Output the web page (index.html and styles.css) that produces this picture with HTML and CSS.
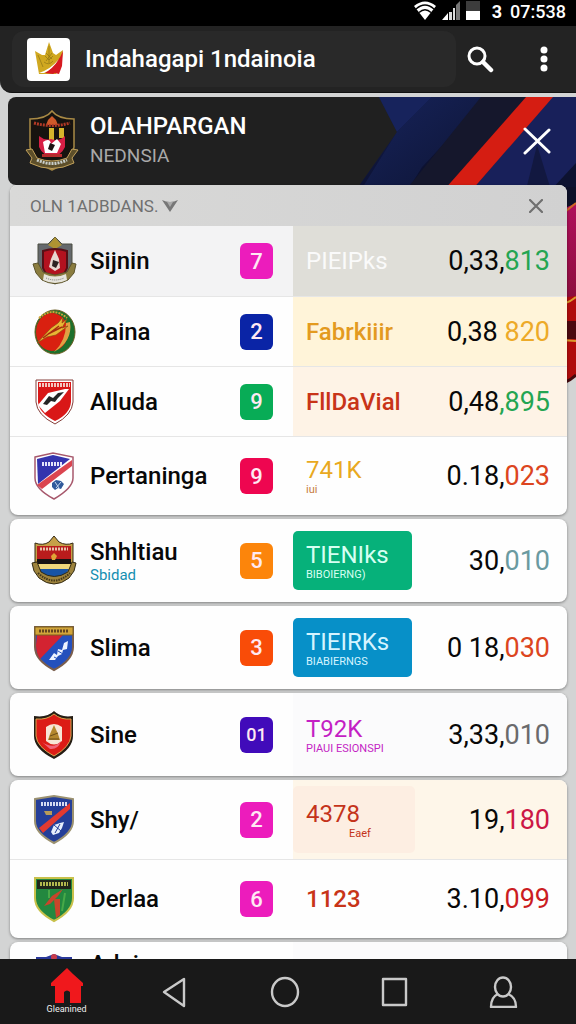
FILE: index.html
```html
<!DOCTYPE html>
<html lang="id">
<head>
<meta charset="utf-8">
<meta name="viewport" content="width=device-width, initial-scale=1">
<title>Olahpargan</title>
<link rel="stylesheet" href="styles.css">
</head>
<body>
<div class="app">
  <div class="status">
    <svg class="status-icons" viewBox="0 0 70 20" aria-hidden="true">
      <path d="M0 5Q11-4 22 5L11 19Z" fill="#fff"/>
      <path d="M2 8Q11 0 20 8M5 11.500Q11 6 17 11.500" fill="none" stroke="#000" stroke-width="1.300"/>
      <path d="M28 19L34 12V19Z" fill="#fff"/>
      <path d="M35 11h3v8h-3zM39 7h2v12h-2z" fill="#ddd"/>
      <path d="M42 4l4-4v19h-4z" fill="#777"/>
      <path d="M52 0h14v10H52z" fill="#3c3c3c"/><path d="M52 10h14v9H52z" fill="#fff"/>
    </svg>
    <span class="status-mark">3</span>
    <span class="status-time">07:538</span>
  </div>

  <header class="bar">
    <div class="search">
      <span class="logo">
        <svg viewBox="0 0 30 34" aria-hidden="true">
          <path d="M1 9l7 4 3 0 4-13 4 11 3 2 7-5-2 16-5 8H5z" fill="#d0a820"/>
          <path d="M29 9l-1 15-3 8-4-1-2 1-8-1q13-9 18-22z" fill="#d61a20"/>
          <path d="M5 31Q17 27 25 17Q18 28 10 31z" fill="#fff"/>
          <path d="M15 4v17M11 14l4 4 4-4M10 20q5 4 9-1M4 13l5 12M12 11l6 6M18 11l-6 8" fill="none" stroke="#8f7616" stroke-width=".7"/>
        </svg>
      </span>
      <h1 class="bar-title">Indahagapi 1ndainoia</h1>
    </div>
    <button class="icon-btn" type="button" aria-label="Cari">
      <svg viewBox="0 0 28 28" width="28" height="28"><circle cx="11" cy="11" r="8" fill="none" stroke="#fff" stroke-width="3"/><path d="M17 17l8 8" stroke="#fff" stroke-width="4.500" stroke-linecap="round"/></svg>
    </button>
    <button class="icon-btn more" type="button" aria-label="Menu">
      <svg viewBox="0 0 8 26" width="8" height="26" fill="#fff"><circle cx="4" cy="4" r="3.500"/><circle cx="4" cy="13" r="3.500"/><circle cx="4" cy="22" r="3.500"/></svg>
    </button>
  </header>

  <main class="content">
    <svg class="art" viewBox="0 0 220 293" aria-hidden="true">
      <defs>
        <linearGradient id="navy" x1="0" y1="0" x2="1" y2="1"><stop offset="0" stop-color="#152052"/><stop offset=".5" stop-color="#0c1130"/><stop offset="1" stop-color="#182052"/></linearGradient>
        <linearGradient id="fold" x1="0" y1="0" x2="1" y2="1"><stop offset="0" stop-color="#17235a"/><stop offset="1" stop-color="#0d1434"/></linearGradient>
        <linearGradient id="wine" x1="0" y1="0" x2="0" y2="1"><stop offset="0" stop-color="#b0105c"/><stop offset="1" stop-color="#8c0d3c"/></linearGradient>
      </defs>
      <path d="M23 0H220V108H0V93L41 35Z" fill="url(#navy)"/>
      <path d="M23 0H76L41 35Z" fill="#17235c"/>
      <path d="M76 0H132L66 70L52 93H5L41 35Z" fill="url(#fold)"/>
      <path d="M125 0H170L92 93H50Z" fill="#15172c"/>
      <path d="M196 0H220V93H116Z" fill="#18205a"/>
      <path d="M170 0H197L116 93H88Z" fill="#d51d12"/>
      <path d="M181 48l14 45h-25z" fill="#121840"/>
      <path d="M220 66L195 93H220Z" fill="#0d1230"/>
      <path d="M190 90H220V112H190Z" fill="#0d1028"/>
      <path d="M190 120L220 106V205H190Z" fill="url(#wine)"/>
      <path d="M190 130L220 106" stroke="#cf6a22" stroke-width="2"/>
      <path d="M190 203L220 199V278Q210 286 190 291Z" fill="#b00c0c"/>
      <path d="M190 224H220V242H190Z" fill="#4c0910"/>
      <path d="M190 210Q210 209 220 200M190 242L220 244" stroke="#d99b2d" stroke-width="2" fill="none"/>
      <path d="M190 291Q210 288 220 278" stroke="#44080c" stroke-width="3" fill="none"/>
    </svg>

    <section class="hero">
      <svg class="hero-crest" viewBox="0 0 54 64" aria-hidden="true">
        <path d="M27 2q6 8 22 8v28Q47 53 27 61Q7 53 5 38V10q16 0 22-8z" fill="#17130f" stroke="#a98a45" stroke-width="1.500"/>
        <path d="M27 7l4 4 2 5H21l2-5z" fill="#cf5a2a"/>
        <path d="M9 14q18 5 36 0" fill="none" stroke="#b33a26" stroke-width="3" stroke-dasharray="2 1"/>
        <path d="M24 19h5v12h-5zM34 19h5v10h-5z" fill="#d6b52c"/>
        <path d="M14 27q6 5 12 3 8 3 14-3v11q-4 9-13 9t-13-9z" fill="#d81f45"/>
        <path d="M18 33q7-5 8 2l6-5 4 5-4 9H20z" fill="#fff"/><path d="M25 34l5 2-3 6-4-2z" fill="#1d1414"/>
        <path d="M1 41l6-1 5 9q15 6 30 0l5-9 6 1-6 8 2 5q-22 11-44 0l2-5z" fill="#5d4f2a" stroke="#c2a25c"/>
        <path d="M12 51q15 7 30 0" fill="none" stroke="#c9cfcb" stroke-width="3" stroke-dasharray="2 1"/>
        <path d="M17 45h20v3H17z" fill="#b52c2c"/>
      </svg>
      <div class="hero-text">
        <h2 class="hero-title">OLAHPARGAN</h2>
        <p class="hero-sub">NEDNSIA</p>
      </div>
      <button class="icon-btn" type="button" aria-label="Tutup">
        <svg viewBox="0 0 28 28" width="28" height="28"><path d="M2 2l24 23M26 3L2 26" stroke="#fff" stroke-width="3" stroke-linecap="round"/></svg>
      </button>
    </section>

    <div class="cards">
      <section class="card">
        <div class="filter">
          <button class="filter-btn" type="button">OLN 1ADBDANS.
            <svg viewBox="0 0 16 13" width="16" height="13"><path d="M0 1q4 2 8 2 4 0 8-2L8 13z" fill="#777"/><path d="M5 3h6L8 8z" fill="#aaa"/></svg>
          </button>
          <button class="filter-close" type="button" aria-label="Hapus filter">
            <svg viewBox="0 0 14 14" width="14" height="14"><path d="M1 1l12 12M13 1L1 13" stroke="#707070" stroke-width="2.200" stroke-linecap="round"/></svg>
          </button>
        </div>
        <ul class="rows">
          <li class="row row-short tint-grey">
            <div class="team">
              <svg class="crest" viewBox="0 0 46 50" aria-hidden="true">
                <path d="M7 8l10 0 7-7 7 7 10 0v23q-3 12-17 17Q10 43 7 31z" fill="#64686c" stroke="#4a4c40"/>
                <path d="M24 1l4 5 3 3-7 4-7-4 3-3z" fill="#ae9332"/>
                <path d="M12 15q12-4 24 0v17q-4 10-12 12-8-2-12-12z" fill="#b3121f" stroke="#561016" stroke-width="2"/>
                <path d="M24 14l4 9 1 9-5 3-6-4 2-8z" fill="#e8d8d2"/><path d="M22 24l6 2-3 6-4-2z" fill="#2d2222"/>
                <path d="M2 28l5-1 5 9 12 3 12-3 5-9 4 1-2 9-6 7q-13 7-26 0l-6-7z" fill="#8a7c3f" stroke="#5b532c"/>
                <path d="M13 38q11 5 22 0l1 6q-12 6-24 0z" fill="#e6e4dc"/><path d="M15 42q9 4 18 0" fill="none" stroke="#777" stroke-dasharray="1 1"/>
              </svg>
              <span class="name">Sijnin</span><span class="badge magenta">7</span>
            </div>
            <div class="data"><div class="plan white">PIEIPks</div><div class="sum">0,33,<span class="green">813</span></div></div>
          </li>
          <li class="row row-short tint-yellow">
            <div class="team">
              <svg class="crest" viewBox="0 0 46 50" aria-hidden="true">
                <ellipse cx="24" cy="25" rx="20" ry="22" fill="#1d702c" stroke="#6a5c20"/>
                <ellipse cx="21" cy="25" rx="16" ry="19" fill="#d92010"/>
                <path d="M8 11q14-12 28 0" fill="none" stroke="#cfa53a" stroke-width="2" stroke-dasharray="2 1"/>
                <path d="M39 15Q42 34 23 45Q35 34 35 16z" fill="#e0a143"/>
                <path d="M6 36l14-15 7-5 5-6-1 6 5-4-5 9 6-2-12 9-9 2z" fill="#e8b634" stroke="#8b4a13" stroke-width=".7"/>
                <path d="M12 31l16-12M17 27l14-7" stroke="#a72d10" stroke-width="1.500"/>
              </svg>
              <span class="name">Paina</span><span class="badge blue">2</span>
            </div>
            <div class="data"><div class="plan bold amber">Fabrkiiir</div><div class="sum">0,38 <span class="yellow">820</span></div></div>
          </li>
          <li class="row row-short tint-peach">
            <div class="team">
              <svg class="crest" viewBox="0 0 46 50" aria-hidden="true">
                <path d="M5 3h37v22q-1 13-18 22Q6 38 5 25z" fill="#fff" stroke="#853f3a"/>
                <path d="M7 5h33v20q-1 12-16 19Q8 36 7 25z" fill="#d91717"/>
                <path d="M8 8h31" stroke="#f3c8c2" stroke-width="4" stroke-dasharray="2 1"/>
                <path d="M7 28l10-12 17-4 4 0-9 12-15 12z" fill="#fff"/>
                <path d="M12 27l6-8 4 2 5-5 6-1-6 6-3 4-4-1-4 4z" fill="#252525"/>
              </svg>
              <span class="name">Alluda</span><span class="badge emerald">9</span>
            </div>
            <div class="data"><div class="plan bold red">FllDaVial</div><div class="sum">0,48<span class="green">,895</span></div></div>
          </li>
          <li class="row">
            <div class="team">
              <svg class="crest" viewBox="0 0 46 50" aria-hidden="true">
                <path d="M4 6l18-4 20 4v21q0 10-19 21Q4 38 4 27z" fill="#fff" stroke="#a7586c" stroke-width="1.500"/>
                <path d="M6 8l16-4 17 4L7 33z" fill="#3434ae"/>
                <path d="M41 9v6L11 38 6 34z" fill="#db4550"/>
                <path d="M11 13h21" stroke="#e6e6fa" stroke-width="4" stroke-dasharray="2 1"/>
                <path d="M21 32l4-3 5 1 3 3-3 5-3-1-3 2-3-3z" fill="#315a9b"/><path d="M24 31l4 6M30 31l-5 6" stroke="#c6d7ed"/>
              </svg>
              <span class="name">Pertaninga</span><span class="badge crimson">9</span>
            </div>
            <div class="data"><div class="plan gold">741K<small class="note rust">iui</small></div><div class="sum">0.18,<span class="orange">023</span></div></div>
          </li>
        </ul>
      </section>

      <ul class="card rows">
        <li class="row">
          <div class="team">
            <svg class="crest" viewBox="0 0 46 50" aria-hidden="true">
              <path d="M23 0l5 6q7 4 14 1v21q-2 12-19 18Q6 40 4 28V7q8 3 14-1z" fill="#c5a048" stroke="#342a14"/>
              <path d="M6 10h34v14H6z" fill="#b91c1c"/><path d="M6 23h34v5H6z" fill="#171313"/><path d="M6 28h34v5H7z" fill="#f0d77c"/>
              <path d="M8 33h30q-3 7-15 11Q11 40 8 33z" fill="#1754a6"/>
              <path d="M9 13h28" stroke="#e8c2a8" stroke-width="3" stroke-dasharray="2 1"/>
              <path d="M23 17l3 3-2 4h-3l-1-4z" fill="#e0a436"/>
              <path d="M1 27l5-1 4 10q13 9 27 0l4-10 4 1-2 8-5 7q-15 12-30 0l-5-7z" fill="#9d833d" stroke="#322a13"/>
              <path d="M7 37q16 15 32 0" fill="none" stroke="#433719" stroke-width="2" stroke-dasharray="1.500 1"/>
            </svg>
            <span class="name">Shhltiau<small class="team-sub">Sbidad</small></span><span class="badge orange-fill">5</span>
          </div>
          <div class="data"><div class="plan tile tile-green">TIENIks<small class="note">BIBOIERNG)</small></div><div class="sum">30,<span class="teal">010</span></div></div>
        </li>
      </ul>

      <ul class="card rows">
        <li class="row">
          <div class="team">
            <svg class="crest" viewBox="0 0 46 50" aria-hidden="true">
              <path d="M4 4h38v20q0 13-19 23Q4 37 4 24z" fill="#2450bd" stroke="#7a5d4c" stroke-width="2"/>
              <path d="M6 12h26L9 36Q5 30 5 22z" fill="#d32331"/>
              <path d="M4 4h38v8H4z" fill="#d1a43a" stroke="#7b6021"/>
              <path d="M8 8h30" stroke="#62441f" stroke-width="3" stroke-dasharray="2 1"/>
              <path d="M18 37l5-7 3 2 1-6 4 1 2-7 4-2-1 8-4 1-1 4-4 2-3 4z" fill="#eef3ff"/>
              <path d="M23 34l4 2M27 28l5 3" stroke="#2450bd"/>
            </svg>
            <span class="name">Slima</span><span class="badge vermilion">3</span>
          </div>
          <div class="data"><div class="plan tile tile-blue">TIEIRKs<small class="note">BIABIERNGS</small></div><div class="sum">0 18,<span class="orange">030</span></div></div>
        </li>
      </ul>

      <ul class="card rows">
        <li class="row tint-faint">
          <div class="team">
            <svg class="crest" viewBox="0 0 46 50" aria-hidden="true">
              <path d="M23 1q7 7 19 5v20q0 13-19 23Q3 39 3 26V6q13 2 20-5z" fill="#251d14"/>
              <path d="M23 4q7 6 17 5v17q-1 11-17 20Q6 37 5 26V9q11 1 18-5z" fill="#dc1c16" stroke="#d7a64e"/>
              <path d="M15 17q8-6 16 0v14q-8 7-16 0z" fill="#f7e6d6"/>
              <path d="M23 15l4 9 2 6h-12l2-6z" fill="#b4872c"/><path d="M19 26l8-3M18 29h10" stroke="#6c4c16"/>
              <path d="M11 32q12 8 19-1-3 9-11 8z" fill="#ef6479"/>
            </svg>
            <span class="name">Sine</span><span class="badge violet">01</span>
          </div>
          <div class="data"><div class="plan purple">T92K<small class="note">PIAUI ESIONSPI</small></div><div class="sum">3,33,<span class="grey">010</span></div></div>
        </li>
      </ul>

      <ul class="card rows">
        <li class="row tint-cream">
          <div class="team">
            <svg class="crest" viewBox="0 0 46 50" aria-hidden="true">
              <path d="M4 4l19-3 19 3v22q0 12-19 22Q4 38 4 26z" fill="#243e98" stroke="#9c9270" stroke-width="2"/>
              <path d="M39 8v6L12 38 8 33z" fill="#e33a30"/>
              <path d="M10 9h26" stroke="#d6dcf2" stroke-width="4" stroke-dasharray="2 1"/>
              <path d="M13 16h8v4h-6z" fill="#b79b58"/>
              <path d="M20 37l3-7 6-2 4-1-2 6-3 5-6 2z" fill="#e7eefb"/><path d="M23 30l7 6M29 29l-5 9" stroke="#243e98"/>
            </svg>
            <span class="name">Shy/</span><span class="badge magenta">2</span>
          </div>
          <div class="data"><div class="plan tile tile-peach">4378<small class="note note-end">Eaef</small></div><div class="sum">19,<span class="rose">180</span></div></div>
        </li>
        <li class="row">
          <div class="team">
            <svg class="crest" viewBox="0 0 46 50" aria-hidden="true">
              <path d="M4 4h38v20q0 13-19 23Q4 37 4 24z" fill="#23883f" stroke="#c8c14b" stroke-width="2"/>
              <path d="M6 6h34v9H6z" fill="#20271a"/>
              <path d="M9 10h28" stroke="#b3b84e" stroke-width="4" stroke-dasharray="2 1"/>
              <path d="M13 32l8-10 11-7-5 7-8 8z" fill="#c9452b"/><path d="M23 25h6v16l-4 3z" fill="#c9452b"/><path d="M18 16v8M34 19l-3 18" stroke="#48a948" stroke-width="2"/>
            </svg>
            <span class="name">Derlaa</span><span class="badge magenta">6</span>
          </div>
          <div class="data"><div class="plan bold red">1123</div><div class="sum">3.10,<span class="scarlet">099</span></div></div>
        </li>
      </ul>

      <ul class="card rows">
        <li class="row row-last tint-faint">
          <div class="team">
            <svg class="crest" viewBox="0 0 46 50" aria-hidden="true">
              <path d="M5 4h10l8-3 8 3h10v21q0 12-18 22Q5 37 5 25z" fill="#29389a"/><circle cx="23" cy="4" r="3" fill="#c83c4c"/>
            </svg>
            <span class="name">Aduimanana</span>
          </div>
          <div class="data"></div>
        </li>
      </ul>
    </div>
  </main>

  <nav class="nav" aria-label="Navigasi">
    <a class="nav-item" href="#home">
      <svg viewBox="0 0 34 35" width="34" height="35"><path d="M17 0l6 6 10 9v3h-2v17H20V24q-3-3-6 0v11H5V18H1v-3z" fill="#f0181c"/></svg>
      <span class="nav-label">Gleanined</span>
    </a>
    <a class="nav-item" href="#back" aria-label="Kembali"><svg viewBox="0 0 32 32" width="32" height="32"><path d="M24 3v27L4 16z" class="line"/></svg></a>
    <a class="nav-item" href="#start" aria-label="Mulai"><svg viewBox="0 0 32 32" width="32" height="32"><ellipse cx="16" cy="16" rx="13" ry="14" class="line"/></svg></a>
    <a class="nav-item" href="#recent" aria-label="Terbaru"><svg viewBox="0 0 32 32" width="32" height="32"><path d="M5 3h23v26H5z" class="line"/></svg></a>
    <a class="nav-item" href="#profile" aria-label="Profil"><svg viewBox="0 0 32 32" width="32" height="32"><ellipse cx="16" cy="11" rx="8" ry="9.500" class="line"/><path d="M11 18q-7 3-7 13h25q0-10-8-13" class="line"/></svg></a>
  </nav>
</div>
</body>
</html>
```

FILE: styles.css
```css
* { box-sizing: border-box; }

body {
  margin: 0;
  background: #d3d4d4;
  font-family: Roboto, "Liberation Sans", sans-serif;
  color: #080808;
}

h1, h2, p, ul { margin: 0; padding: 0; }
button { border: 0; padding: 0; background: none; font: inherit; color: inherit; }
svg { flex: none; }

.app { display: flex; flex-direction: column; height: 100vh; }

/* Status and title bars */
.status {
  display: flex;
  align-items: center;
  justify-content: flex-end;
  height: 26px;
  padding: 0 10px 4px 0;
  background: #000;
  color: #fff;
}
.status-icons { width: 70px; height: 20px; }
.status-mark { margin: 0 8px; font-size: 18px; font-weight: 700; }
.status-time { font-size: 18px; font-weight: 500; }

.bar {
  display: flex;
  align-items: center;
  height: 67px;
  padding: 0 12px;
  border-bottom: 1px solid #111;
  border-radius: 0 0 0 12px;
  background: #232323;
  color: #fff;
}
.search {
  display: flex;
  flex: 1;
  align-items: center;
  gap: 15px;
  min-width: 0;
  height: 56px;
  padding-left: 15px;
  border-radius: 12px;
  background: #292929;
}
.logo {
  display: grid;
  place-items: center;
  width: 43px;
  height: 43px;
  border-radius: 4px;
  background: #fff;
}
.logo svg { width: 30px; height: 34px; }
.bar-title { font-size: 24px; font-weight: 500; white-space: nowrap; }
.icon-btn { display: grid; flex: none; place-items: center; width: 48px; height: 48px; }
.more { width: 40px; margin-left: 20px; }

/* Content */
.content {
  position: relative;
  flex: 1;
  min-height: 0;
  padding-top: 4px;
  overflow: auto;
  scrollbar-width: none;
}
.art { position: absolute; top: 4px; right: 0; width: 220px; height: 293px; }

.hero {
  display: flex;
  align-items: center;
  gap: 11px;
  height: 88px;
  margin-left: 8px;
  padding: 0 15px 0 17px;
  border-radius: 8px 0 0 8px;
  background: #202020;
  color: #fff;
}
.hero > * { position: relative; }
.hero-crest { width: 54px; height: 64px; }
.hero-text { flex: 1; }
.hero-title { font-size: 24px; font-weight: 500; line-height: 30px; }
.hero-sub { font-size: 19px; line-height: 30px; color: #a9a9a9; }

.cards {
  position: relative;
  display: grid;
  gap: 4px;
  padding: 0 9px 0 10px;
}
.card {
  overflow: hidden;
  border-radius: 8px;
  background: #fefefe;
  box-shadow: 0 1px 3px #0006;
}
.filter {
  display: flex;
  align-items: center;
  justify-content: space-between;
  height: 41px;
  padding: 0 24px 0 20px;
  background: linear-gradient(90deg, #d9d9d8, #d1d1d1);
}
.filter-btn { display: flex; align-items: center; gap: 4px; font-size: 17px; color: #707070; }
.filter-close { display: grid; place-items: center; }

.rows { list-style: none; }
.row { display: grid; grid-template-columns: 283fr 274fr; min-height: 79px; }
.card.rows > .row:only-child { min-height: 83px; }
.rows .row-short { min-height: 70px; }
.card.rows > .row-last:only-child { min-height: 72px; }
.row + .row { border-top: 1px solid #e6e6e6; }
.team { display: flex; align-items: center; min-width: 0; padding: 0 20px 0 21px; }
.crest { width: 46px; height: 50px; }
.name { flex: 1; margin-left: 13px; font-size: 24px; font-weight: 500; line-height: 28px; }
.row-last .name { align-self: flex-start; margin-top: 8px; }
.team-sub { display: block; font-size: 15px; font-weight: 400; line-height: 18px; color: #168fb1; }
.badge {
  display: grid;
  place-items: center;
  width: 33px;
  height: 36px;
  border-radius: 6px;
  color: #ffe9f3;
  font-size: 22px;
  font-weight: 500;
}
.data { display: flex; align-items: center; justify-content: space-between; padding-right: 17px; }
.plan { padding-left: 13px; font-size: 24px; line-height: 28px; }
.note { display: block; font-size: 11px; line-height: 12px; }
.note-end { padding-left: 43px; }
.bold { font-weight: 500; }
.sum { font-size: 27px; white-space: nowrap; }

.tile {
  display: flex;
  flex-direction: column;
  justify-content: center;
  width: 119px;
  height: 59px;
  border-radius: 5px;
  color: #d6fff2;
}
.tile-green { background: #06b17a; }
.tile-blue { background: #0790c8; color: #d5f4ff; }
.tile-peach { width: 122px; height: 67px; background: #fdeee2; color: #c4331a; }

/* Row tints */
.tint-grey { background: #f3f3f4; }
.tint-grey .data { background: #dfded8; }
.tint-yellow .data { background: #fff4d9; }
.tint-peach .data { background: #fef3e6; }
.tint-cream .data { background: #fef6e9; }
.tint-faint .data { background: #fbfbfc; }

/* Badge fills */
.magenta { background: #ec1cbc; }
.blue { background: #0a24a6; }
.emerald { background: #08ac56; }
.crimson { background: #ee0650; }
.orange-fill { background: #fc850b; }
.vermilion { background: #f94c08; }
.violet { background: #410bba; font-size: 18px; }

/* Text colours */
.white { color: #fafafa; }
.amber { color: #e39a20; }
.gold { color: #e9a91f; }
.red { color: #c83418; }
.rust { color: #c77b42; }
.purple { color: #c41fc4; }
.green { color: #24a552; }
.yellow { color: #edaa28; }
.orange { color: #dc4520; }
.teal { color: #6a9aa0; }
.grey { color: #6a6a6c; }
.rose { color: #cc1745; }
.scarlet { color: #cb1c22; }

/* Bottom navigation */
.nav {
  position: relative;
  display: grid;
  grid-template-columns: repeat(5, 1fr);
  height: 65px;
  padding: 0 18px 0 12px;
  background: #191919;
}
.nav-item {
  display: flex;
  flex-direction: column;
  align-items: center;
  justify-content: center;
  color: #eee;
  text-decoration: none;
}
.nav-label { font-size: 9px; line-height: 12px; }
.line { fill: none; stroke: #c9c9c9; stroke-width: 2.4; stroke-linejoin: round; }
```
